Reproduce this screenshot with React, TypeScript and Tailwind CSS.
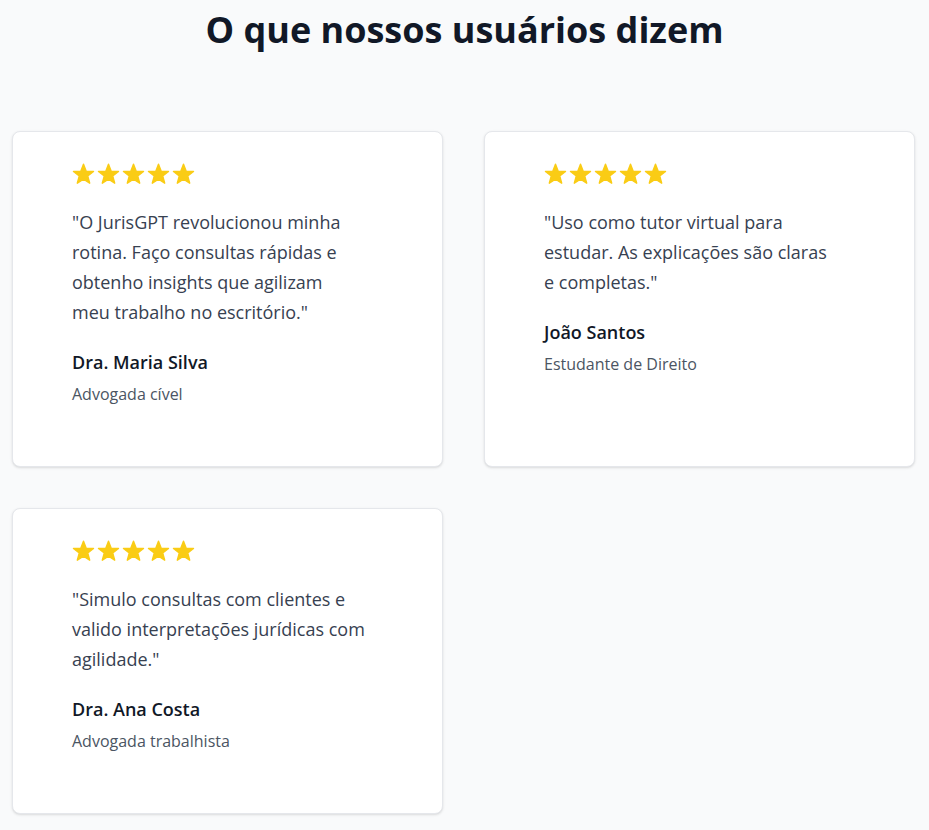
const testimonials = [
    {
        id: 1,
        quote: [
            '"O JurisGPT revolucionou minha',
            'rotina. Faço consultas rápidas e',
            'obtenho insights que agilizam',
            'meu trabalho no escritório."',
        ],
        name: 'Dra. Maria Silva',
        role: 'Advogada cível',
    },
    {
        id: 2,
        quote: [
            '"Uso como tutor virtual para',
            'estudar. As explicações são claras',
            'e completas."',
        ],
        name: 'João Santos',
        role: 'Estudante de Direito',
    },
    {
        id: 3,
        quote: [
            '"Simulo consultas com clientes e',
            'valido interpretações jurídicas com',
            'agilidade."',
        ],
        name: 'Dra. Ana Costa',
        role: 'Advogada trabalhista',
    },
]

const Star = () => (
    <svg width="23" height="22" viewBox="0 0 24 23" className="text-[#facc15]">
        <polygon
            points="12,1.2 14.72,8.46 22.46,8.8 16.39,13.63 18.47,21.1 12,16.82 5.53,21.1 7.61,13.63 1.54,8.8 9.28,8.46"
            fill="currentColor"
            stroke="currentColor"
            strokeWidth="1.5"
            strokeLinejoin="round"
        />
    </svg>
)

export default function App() {
    return (
        <div className="min-h-screen bg-[#f9fafb] pt-[10px] font-['Open_Sans',sans-serif]">
            <h2 className="text-center text-4xl font-bold text-[#111827]">O que nossos usuários dizem</h2>
            <div className="mt-[81px] grid grid-cols-[431px_431px] gap-x-[41px] gap-y-[41px] pl-3">
                {testimonials.map(t => (
                    <div key={t.id} className="rounded-lg border border-[#e5e7eb] bg-white pb-[60px] pl-[59px] pr-[40px] pt-[31px] shadow-sm">
                        <div className="mb-[22px] flex gap-[2px]">
                            {[0, 1, 2, 3, 4].map(i => <Star key={i} />)}
                        </div>
                        <p className="text-lg leading-[30px] text-[#374151]">
                            {t.quote.map(line => <span key={line} className="block whitespace-nowrap">{line}</span>)}
                        </p>
                        <h4 className="mt-[21px] text-lg font-semibold leading-7 text-[#111827]">{t.name}</h4>
                        <p className="mt-[6px] text-base leading-6 text-[#4b5563]">{t.role}</p>
                    </div>
                ))}
            </div>
        </div>
    )
}
